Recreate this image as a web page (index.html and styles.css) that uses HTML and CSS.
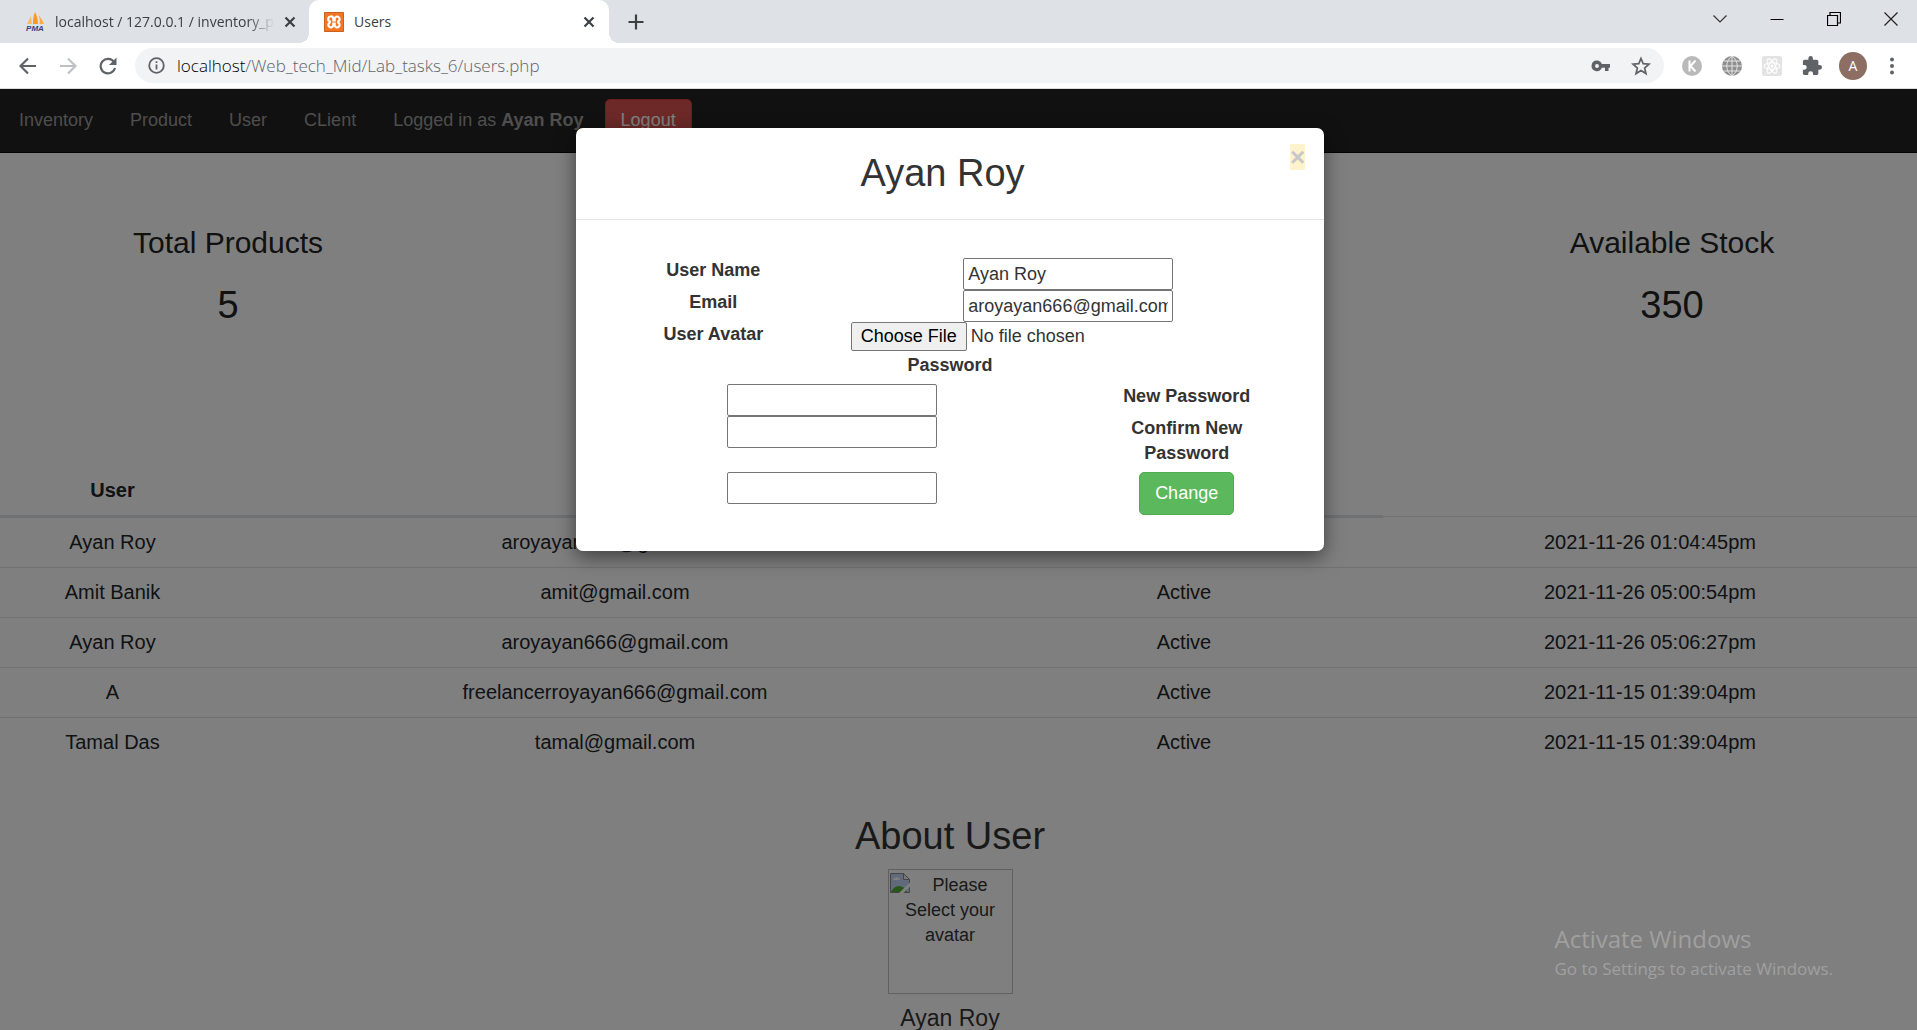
FILE: index.html
```html
<!DOCTYPE html>
<html lang="en">
<head>
<meta charset="utf-8">
<title>Users</title>
<link rel="stylesheet" href="styles.css">
</head>
<body>
<header class="browser">
  <div class="tabstrip">
    <div class="tab">
      <svg class="favicon" viewBox="0 0 20 20" aria-hidden="true"><path d="M6 4 L2 12 H7Z" fill="#fbb96a"/><path d="M10 0 C8 5 8 9 8 12 H13 C13 8 12 4 10 0Z" fill="#f79a1f"/><path d="M13.500 3 C15 7 15 10 14.500 12 H19 C18 9 16 6 13.500 3Z" fill="#fbab40"/><text x="10" y="19" text-anchor="middle" class="pma">PMA</text></svg>
      <span class="tab-title faded">localhost / 127.0.0.1 / inventory_project</span>
      <button class="icon-btn" aria-label="Close tab"><svg width="12" height="12" viewBox="0 0 12 12"><path d="M1.500 1.500L10.500 10.500M10.500 1.500L1.500 10.500" stroke="#3c4043" stroke-width="2.200"/></svg></button>
    </div>
    <div class="tab active">
      <svg class="favicon" viewBox="0 0 20 20" aria-hidden="true"><rect width="20" height="20" rx="2" fill="#f37623"/><path d="M.5.5H19.500V19.500H.5Z" fill="none" stroke="#c9621f"/><path d="M6.500 4.500a2.500 2.500 0 0 0-1 4.700q1 .8 0 1.600a2.500 2.500 0 1 0 3.800 2.700v-1.800h1.400v1.800a2.500 2.500 0 1 0 3.800-2.700q-1-.8 0-1.600a2.500 2.500 0 1 0-3.800-2.700v1.800H9.300V6.500a2.500 2.500 0 0 0-2.800-2z" fill="none" stroke="#fff" stroke-width="2.200"/></svg>
      <span class="tab-title">Users</span>
      <button class="icon-btn" aria-label="Close tab"><svg width="12" height="12" viewBox="0 0 12 12"><path d="M1.500 1.500L10.500 10.500M10.500 1.500L1.500 10.500" stroke="#3c4043" stroke-width="2.200"/></svg></button>
    </div>
    <button class="icon-btn new-tab" aria-label="New tab"><svg width="16" height="16" viewBox="0 0 16 16"><path d="M8 0.500V15.500M0.500 8H15.500" stroke="#3c4043" stroke-width="2.200"/></svg></button>
    <div class="window-controls">
      <button class="icon-btn" aria-label="Search tabs"><svg width="14" height="14" viewBox="0 0 14 14"><path d="M.5 3.500L7 10L13.500 3.500" fill="none" stroke="#333" stroke-width="1.200"/></svg></button>
      <button class="icon-btn" aria-label="Minimize"><svg width="14" height="14" viewBox="0 0 14 14"><path d="M.5 7.500H13.500" stroke="#000"/></svg></button>
      <button class="icon-btn" aria-label="Restore"><svg width="14" height="14" viewBox="0 0 14 14"><path d="M.5 3.500H10.500V13.500H.5ZM3 3V.5H13.500V11H11" fill="none" stroke="#000" stroke-width="1.200"/></svg></button>
      <button class="icon-btn" aria-label="Close window"><svg width="14" height="14" viewBox="0 0 14 14"><path d="M.5.5L13.500 13.500M13.500.5L.5 13.500" stroke="#222" stroke-width="1.200"/></svg></button>
    </div>
  </div>
  <div class="toolbar">
    <button class="icon-btn nav-btn" aria-label="Back"><svg width="18" height="18" viewBox="0 0 18 18"><path d="M17 9H2M9 1.500L1.500 9L9 16.500" fill="none" stroke="#5f6368" stroke-width="2.200"/></svg></button>
    <button class="icon-btn nav-btn" aria-label="Forward"><svg width="18" height="18" viewBox="0 0 18 18"><path d="M1 9H16M9 1.500L16.500 9L9 16.500" fill="none" stroke="#bdc1c6" stroke-width="2.200"/></svg></button>
    <button class="icon-btn nav-btn" aria-label="Reload"><svg width="18" height="18" viewBox="0 0 18 18"><path d="M15 5A7.300 7.300 0 1 0 16 11" fill="none" stroke="#5f6368" stroke-width="2.200"/><path d="M17.500 .5V8H10Z" fill="#5f6368"/></svg></button>
    <div class="omnibox">
      <svg width="17" height="17" viewBox="0 0 17 17" aria-hidden="true"><circle cx="8.500" cy="8.500" r="7.300" fill="none" stroke="#5f6368" stroke-width="1.800"/><path d="M8.500 7.500V12.500M8.500 4.300V6" stroke="#5f6368" stroke-width="1.800"/></svg>
      <span class="url"><b>localhost</b>/Web_tech_Mid/Lab_tasks_6/users.php</span>
      <button class="icon-btn" aria-label="Passwords"><svg width="20" height="20" viewBox="0 0 20 20"><path d="M6 4.500a5.300 5.300 0 1 0 4.800 7.300H14V15h3.500v-3.200H19V8H10.800A5.300 5.300 0 0 0 6 4.500ZM6 8a1.900 1.900 0 1 1 0 3.900A1.900 1.900 0 0 1 6 8Z" fill="#5f6368" fill-rule="evenodd"/></svg></button>
      <button class="icon-btn" aria-label="Bookmark"><svg width="20" height="20" viewBox="0 0 20 20"><path d="M10 2.500L12.200 7.700L18 8.200L13.600 12L15 17.600L10 14.600L5 17.600L6.400 12L2 8.200L7.800 7.700Z" fill="none" stroke="#5f6368" stroke-width="1.700"/></svg></button>
    </div>
    <div class="extensions">
      <button class="icon-btn" aria-label="K extension"><svg width="20" height="20" viewBox="0 0 20 20"><circle cx="10" cy="10" r="10" fill="#b9b9b9"/><path d="M7.500 4.500V15.500M13.500 4.500L8.500 10L13.500 15.500" fill="none" stroke="#fff" stroke-width="2"/></svg></button>
      <button class="icon-btn" aria-label="Globe extension"><svg width="20" height="20" viewBox="0 0 20 20"><circle cx="10" cy="10" r="10" fill="#8f8f8f"/><path d="M10 0V20M0 10H20M2 5H18M2 15H18M10 0C3 5 3 15 10 20M10 0C17 5 17 15 10 20" fill="none" stroke="#e4e4e4" stroke-width="1"/></svg></button>
      <button class="icon-btn" aria-label="React extension"><svg width="20" height="20" viewBox="0 0 20 20"><rect width="20" height="20" rx="2" fill="#e3e3e3"/><g fill="none" stroke="#fff" stroke-width="1.100"><ellipse cx="10" cy="10" rx="8" ry="3.200"/><ellipse cx="10" cy="10" rx="8" ry="3.200" transform="rotate(60 10 10)"/><ellipse cx="10" cy="10" rx="8" ry="3.200" transform="rotate(120 10 10)"/></g><circle cx="10" cy="10" r="1.500" fill="#fff"/></svg></button>
      <button class="icon-btn" aria-label="Extensions"><svg width="20" height="20" viewBox="1 1 22 22"><path d="M20.500 11H19V7c0-1.100-.9-2-2-2h-4V3.500a2.500 2.500 0 0 0-5 0V5H4c-1.100 0-2 .9-2 2v3.800h1.500a2.700 2.700 0 0 1 0 5.400H2V20c0 1.100.9 2 2 2h3.800v-1.500a2.700 2.700 0 0 1 5.400 0V22H17c1.100 0 2-.9 2-2v-4h1.500a2.500 2.500 0 0 0 0-5z" fill="#5f6368"/></svg></button>
      <button class="profile" aria-label="Profile">A</button>
      <button class="icon-btn" aria-label="Menu"><svg width="16" height="20" viewBox="0 0 16 20"><g fill="#5f6368"><circle cx="8" cy="3.500" r="2"/><circle cx="8" cy="10" r="2"/><circle cx="8" cy="16.500" r="2"/></g></svg></button>
    </div>
  </div>
</header>

<div class="page">
  <nav class="navbar">
    <a href="#">Inventory</a>
    <a href="#">Product</a>
    <a href="#">User</a>
    <a href="#">CLient</a>
    <span>Logged in as <strong>Ayan Roy</strong></span>
    <button class="btn btn-danger">Logout</button>
  </nav>

  <section class="stats">
    <div class="stat"><h3>Total Products</h3><p>5</p></div>
    <div class="stat"><h3>Available Stock</h3><p>350</p></div>
  </section>

  <table class="users">
    <colgroup><col class="c-user"><col class="c-avatar"><col><col class="c-status"><col class="c-date"></colgroup>
    <thead><tr><th>User</th><th></th><th></th><th></th></tr></thead>
    <tbody>
      <tr><td>Ayan Roy</td><td></td><td>aroyayan666@gmail.com</td><td></td><td>2021-11-26 01:04:45pm</td></tr>
      <tr><td>Amit Banik</td><td></td><td>amit@gmail.com</td><td>Active</td><td>2021-11-26 05:00:54pm</td></tr>
      <tr><td>Ayan Roy</td><td></td><td>aroyayan666@gmail.com</td><td>Active</td><td>2021-11-26 05:06:27pm</td></tr>
      <tr><td>A</td><td></td><td>freelancerroyayan666@gmail.com</td><td>Active</td><td>2021-11-15 01:39:04pm</td></tr>
      <tr><td>Tamal Das</td><td></td><td>tamal@gmail.com</td><td>Active</td><td>2021-11-15 01:39:04pm</td></tr>
    </tbody>
  </table>

  <section class="about">
    <h2>About User</h2>
    <div class="avatar">
      <svg width="20" height="20" viewBox="0 0 20 20" aria-hidden="true"><path d="M.5.5H13.500L19.500 6.500V19.500H.5Z" fill="#c3d5f5" stroke="#8b8b8b"/><path d="M13.500.5V6.500H19.500Z" fill="#eee" stroke="#8b8b8b"/><path d="M3 7q0-2 2-2q1-2 3 0q2 0 2 2z" fill="#fff"/><path d="M1 19q3-6 8-6q5 0 8 6z" fill="#4caf2f"/><path d="M9 20L20 9.500V13.500L13.500 20Z" fill="#fff"/></svg>
      Please Select your avatar
    </div>
    <h4>Ayan Roy</h4>
  </section>

  <div class="backdrop">
    <div class="modal" role="dialog" aria-labelledby="modal-title">
      <div class="modal-header">
        <h2 id="modal-title">Ayan Roy</h2>
        <button class="close" aria-label="Close">×</button>
      </div>
      <form class="modal-body">
        <div class="row"><label for="name">User Name</label><div class="field wide"><input type="text" id="name" value="Ayan Roy"></div></div>
        <div class="row"><label for="email">Email</label><div class="field wide"><input type="text" id="email" value="aroyayan666@gmail.com"></div></div>
        <div class="row"><label for="avatar">User Avatar</label><div class="field wide"><input type="file" id="avatar"></div></div>
        <div class="row"><label class="full" for="password">Password</label></div>
        <div class="row"><div class="field wide"><input type="password" id="password"></div><label for="new-password">New Password</label></div>
        <div class="row"><div class="field wide"><input type="password" id="new-password"></div><label for="confirm-password">Confirm New Password</label></div>
        <div class="row"><div class="field wide"><input type="password" id="confirm-password"></div><div class="field"><button type="button" class="btn btn-success">Change</button></div></div>
      </form>
    </div>
  </div>

  <aside class="watermark"><p class="big">Activate Windows</p><p>Go to Settings to activate Windows.</p></aside>
</div>
</body>
</html>
```
FILE: styles.css
```css
* { box-sizing: border-box; }

body {
  margin: 0;
  height: 100vh;
  display: flex;
  flex-direction: column;
  overflow: hidden;
  font: 18px/25px "Liberation Sans", Arial, sans-serif;
  color: #333;
  background: #fff;
}

h2, h3, h4, p { margin: 0; font-weight: 400; }
button, input { font: inherit; }
svg { display: block; }

/* Browser window */
.browser { flex: none; border-bottom: 1px solid #dadce0; font-family: "Open Sans", "Noto Sans", sans-serif; }
.icon-btn { display: flex; align-items: center; justify-content: center; padding: 0; border: 0; background: none; }

.tabstrip { display: flex; align-items: center; height: 43px; background: #dee1e6; }
.tab { display: flex; align-items: center; gap: 10px; width: 309px; height: 43px; padding: 0 13px 0 25px; font-size: 14px; color: #3c4043; }
.tab.active { position: relative; width: 300px; padding: 0 14px 0 15px; background: #fff; border-radius: 10px 10px 0 0; }
.tab.active::before,
.tab.active::after { content: ""; position: absolute; bottom: 0; width: 10px; height: 10px; }
.tab.active::before { left: -10px; background: radial-gradient(circle at 0 0, transparent 10px, #fff 10px); }
.tab.active::after { right: -10px; background: radial-gradient(circle at 100% 0, transparent 10px, #fff 10px); }
.favicon { flex: none; width: 20px; height: 20px; overflow: visible; }
.pma { font: italic 700 8px "Liberation Sans", sans-serif; fill: #3f3f77; }
.tab-title { flex: 1; overflow: hidden; white-space: nowrap; }
.faded { -webkit-mask-image: linear-gradient(90deg, #000 88%, transparent); mask-image: linear-gradient(90deg, #000 88%, transparent); }
.new-tab { margin-left: 19px; }
.window-controls { display: flex; gap: 43px; margin-left: auto; padding: 0 19px 6px 0; }

.toolbar { display: flex; align-items: center; height: 45px; padding-left: 19px; }
.nav-btn { margin-right: 22px; }
.omnibox { flex: 1; display: flex; align-items: center; gap: 12px; height: 35px; margin-left: -4px; padding: 0 13px; border-radius: 18px; background: #f1f3f4; }
.url { flex: 1; font-size: 17px; font-weight: 300; color: #5f6368; }
.url b { font-weight: 300; color: #000; }
.omnibox .icon-btn + .icon-btn { margin-left: 8px; }
.extensions { display: flex; align-items: center; gap: 20px; padding: 0 17px 0 18px; }
.profile { width: 28px; height: 28px; margin: 0 -3px; padding: 0; border: 0; border-radius: 50%; background: #8d6e63; color: #fff; font-size: 14px; line-height: 28px; }

/* Page */
.page { position: relative; flex: 1; min-height: 0; overflow: hidden; }
.navbar { display: flex; align-items: center; gap: 37px; height: 64px; padding: 0 19px; background: #222; border-bottom: 1px solid #080808; color: #9d9d9d; }
.navbar a { color: inherit; text-decoration: none; }
.navbar .btn { margin-left: -16px; }
.btn { height: 43px; padding: 0 15px; border: 1px solid; border-radius: 5px; color: #fff; }
.btn-danger { background: #d9534f; border-color: #d43f3a; }
.btn-success { background: #5cb85c; border-color: #4cae4c; }

.stats { display: flex; justify-content: space-between; height: 313px; padding: 73px 17px 0 0; text-align: center; color: #222; }
.stat { width: 24%; }
.stat h3 { font-size: 30px; line-height: 33px; }
.stat p { margin-top: 26px; font-size: 38px; line-height: 41px; }

.users { width: 100%; table-layout: fixed; border-collapse: collapse; font-size: 20px; line-height: 29px; text-align: center; color: #212529; }
.c-user { width: 225px; }
.c-avatar { width: 20px; }
.c-status { width: 398px; }
.c-date { width: 534px; }
.users th { height: 50px; padding: 10px; border-bottom: 3px solid #dee2e6; }
.users td { height: 50px; padding: 10px 0; border-top: 1px solid #dee2e6; }

.about { display: flex; flex-direction: column; align-items: center; padding: 48px 17px 0 0; text-align: center; }
.about h2 { font-size: 38px; line-height: 41px; }
.avatar { width: 125px; height: 125px; margin: 12px 0; padding: 3px 1px; border: 1px solid #c0c0c0; }
.avatar svg { float: left; }
.about h4 { font-size: 23px; line-height: 25px; }

/* Dialog */
.backdrop { position: absolute; inset: 0; display: flex; justify-content: center; align-items: flex-start; padding: 39px 17px 0 0; background: rgba(0, 0, 0, 0.5); }
.modal { width: 748px; border-radius: 7px; background: #fff; box-shadow: 0 6px 19px rgba(0, 0, 0, 0.5); }
.modal-header { display: flex; align-items: flex-start; padding: 16px 19px; border-bottom: 1px solid #e5e5e5; text-align: center; }
.modal-header h2 { flex: 1; padding: 9px 0; font-size: 38px; line-height: 41px; }
.close { width: 15px; height: 26px; padding: 0; border: 0; background: #fff3cd; color: #c8c8c8; font-size: 26px; font-weight: 700; line-height: 24px; }
.modal-body { padding: 38px 19px 36px; }
.row { display: flex; text-align: center; }
.row label { width: 33.333%; padding: 0 19px; margin-bottom: 6px; font-weight: 700; }
.row label.full { width: 100%; }
.field { width: 33.333%; padding: 0 19px; }
.field.wide { width: 66.667%; }
.field input { display: block; width: 210px; height: 32px; margin: 0 auto; padding: 1px 4px; border: 1px solid #767676; border-radius: 2px; background: #fff; color: #333; }
.field input[type="file"] { width: 100%; height: 30px; padding: 0; border: 0; }
.field input::file-selector-button { height: 29px; margin: 0 4px 0 0; padding: 0 9px; border: 1px solid #767676; border-radius: 2px; background: #efefef; color: #000; font: inherit; }

/* Activation notice drawn over everything */
.watermark { position: absolute; right: 84px; bottom: 49px; color: #a0a0a0; font: 17px/24px "Open Sans", "Noto Sans", sans-serif; }
.watermark .big { font-size: 24px; line-height: 36px; }
```
